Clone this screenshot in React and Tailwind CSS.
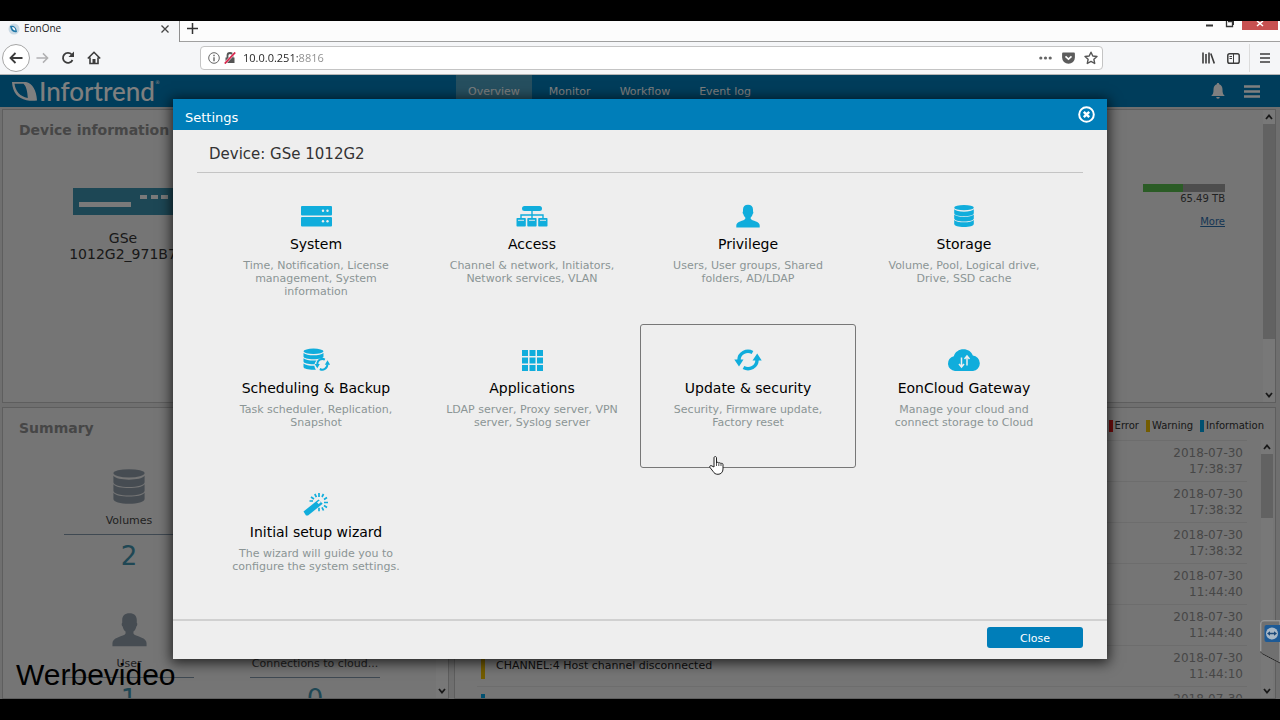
import { useState } from 'react';

const StackIcon = ({ className }) => (
  <svg viewBox="0 0 20 22" className={className} fill="currentColor">
    <ellipse cx="10" cy="2.700" rx="9.800" ry="2.600" />
    <path d="M.2 4.300c1.600 1.700 5 2.400 9.800 2.400s8.200-.7 9.800-2.400v4c0 1.700-4.400 3-9.800 3s-9.800-1.300-9.800-3z" />
    <path d="M.2 9.600c1.600 1.700 5 2.400 9.800 2.400s8.200-.7 9.800-2.400v4c0 1.700-4.400 3-9.800 3s-9.800-1.300-9.800-3z" />
    <path d="M.2 14.900c1.600 1.700 5 2.400 9.800 2.400s8.200-.7 9.800-2.400v4c0 1.700-4.400 3-9.800 3s-9.800-1.300-9.800-3z" />
  </svg>
);

const PersonIcon = ({ className }) => (
  <svg viewBox="0 0 24 24" className={className} fill="currentColor">
    <path d="M12 .8c-3.200 0-5 1.700-5 4.600v2c-.6.3-.4 2.200.3 2.500.3 1.600 1 2.700 2 3.500v1.400c-.6 1.300-2.600 1.600-5.300 2.600C1.500 18.300.3 19.500.3 21.500v2h23.400v-2c0-2-1.200-3.200-3.700-4.100-2.700-1-4.700-1.300-5.300-2.600v-1.400c1-.8 1.700-1.900 2-3.500.7-.3.900-2.200.3-2.500v-2c0-2.900-1.800-4.600-5-4.600z" />
  </svg>
);

const RefreshShape = () => (
  <>
    <path d="M5 11a9 8.500 0 0 1 13.500-7.500M23 11a9 8.500 0 0 1-13.500 7.500" fill="none" stroke="currentColor" strokeWidth="3.400" />
    <path d="M.3 10.500h9.200L5 17.500zM18.500 11.500h9.200L23.200 4.500z" />
  </>
);

const icons = {
  system: (
    <svg viewBox="0 0 31 21" className="h-[21px] w-[31px]" fill="currentColor">
      <rect width="31" height="9.500" rx="1" />
      <rect y="11" width="31" height="9.500" rx="1" />
      <g fill="#eee">
        <circle cx="22" cy="4.800" r="1.200" />
        <circle cx="26.500" cy="4.800" r="1.200" />
        <circle cx="22" cy="15.300" r="1.200" />
        <circle cx="26.500" cy="15.300" r="1.200" />
      </g>
    </svg>
  ),
  access: (
    <svg viewBox="0 0 32 22" className="h-[22px] w-8" fill="currentColor">
      <rect x="6" y="1" width="20" height="5" rx="2.500" />
      <path d="M16 6v7M5 13v-3h22v3" fill="none" stroke="currentColor" strokeWidth="1.400" />
      <rect x=".5" y="13" width="9.300" height="8.500" rx=".8" />
      <rect x="11.300" y="13" width="9.300" height="8.500" rx=".8" />
      <rect x="22.200" y="13" width="9.300" height="8.500" rx=".8" />
      <path d="M2 15.300h6M13 15.300h6M24 15.300h6" stroke="#eee" strokeWidth=".9" />
    </svg>
  ),
  privilege: <PersonIcon className="size-6" />,
  storage: <StackIcon className="h-[22px] w-5" />,
  scheduling: (
    <svg viewBox="0 0 28 24" className="h-6 w-7" fill="currentColor">
      <ellipse cx="11.500" cy="3.300" rx="10" ry="2.700" />
      <path d="M1.500 5c2 1.700 5.500 2.300 10 2.300s8-.6 10-2.300v3.500c0 1.700-4.500 2.700-10 2.700s-10-1-10-2.700z" />
      <path d="M1.500 10.300c2 1.700 5.500 2.300 10 2.300l3-.1c-1 1-1.700 2.300-2 3.700h-1c-5.500 0-10-1-10-2.700z" />
      <path d="M1.500 15.500c2 1.700 5.500 2.300 10 2.300h.9c.1 1.500.7 2.700 1.500 3.900l-2.400.1c-5.500 0-10-1-10-2.700z" />
      <g transform="translate(12.500 9.500) scale(.56 .62)">
        <RefreshShape />
      </g>
    </svg>
  ),
  applications: (
    <svg viewBox="0 0 21 21" className="size-[21px]" fill="currentColor">
      <path d="M0 0h6v6H0zM7.500 0h6v6h-6zM15 0h6v6h-6zM0 7.500h6v6H0zM7.500 7.500h6v6h-6zM15 7.500h6v6h-6zM0 15h6v6H0zM7.500 15h6v6h-6zM15 15h6v6h-6z" />
    </svg>
  ),
  update: (
    <svg viewBox="0 0 28 22" className="h-[22px] w-7" fill="currentColor">
      <RefreshShape />
    </svg>
  ),
  cloud: (
    <svg viewBox="0 0 34 22" className="h-[22px] w-[34px]" fill="currentColor">
      <path d="M8 22a7.500 7.500 0 0 1-1.200-14.800C8 3 12 .3 16.500.3c4.300 0 7.800 2.200 9.300 6.200A7.800 7.800 0 0 1 26 22z" />
      <path d="M14.500 8.500v9M12 15l2.500 3 2.500-3M20 16.500v-9M17.500 10L20 7l2.500 3" fill="none" stroke="#eee" strokeWidth="1.500" />
    </svg>
  ),
  wizard: (
    <svg viewBox="0 0 26 24" className="h-6 w-[26px]" fill="currentColor">
      <path d="M.5 19.500L15.500 7.500l4.200 4.200L5 23.500H3z" />
      <path d="M14 10.500l2.500-2 1.500 1.500-2.300 2z" fill="#eee" />
      <path d="M16 1v4M11.800 2l1.600 3.200M8 5l3 2M6.500 9h3.500M20.500 2L19 5M24 5.500L21 7.500M25 10.500h-4M24 15.500l-3-2M20.500 18.500l-1.500-3.200M16 19.300v-3.500" stroke="currentColor" strokeWidth="1.700" />
    </svg>
  ),
};

const settings = [
  { icon: 'system', title: 'System', text: 'Time, Notification, License\nmanagement, System\ninformation' },
  { icon: 'access', title: 'Access', text: 'Channel & network, Initiators,\nNetwork services, VLAN' },
  { icon: 'privilege', title: 'Privilege', text: 'Users, User groups, Shared\nfolders, AD/LDAP' },
  { icon: 'storage', title: 'Storage', text: 'Volume, Pool, Logical drive,\nDrive, SSD cache' },
  { icon: 'scheduling', title: 'Scheduling & Backup', text: 'Task scheduler, Replication,\nSnapshot' },
  { icon: 'applications', title: 'Applications', text: 'LDAP server, Proxy server, VPN\nserver, Syslog server' },
  { icon: 'update', title: 'Update & security', text: 'Security, Firmware update,\nFactory reset' },
  { icon: 'cloud', title: 'EonCloud Gateway', text: 'Manage your cloud and\nconnect storage to Cloud' },
  { icon: 'wizard', title: 'Initial setup wizard', text: 'The wizard will guide you to\nconfigure the system settings.' },
];

const events = [
  { time: '17:38:37', color: 'bg-[#00a0e0]' },
  { time: '17:38:32', color: 'bg-[#00a0e0]' },
  { time: '17:38:32', color: 'bg-[#00a0e0]' },
  { time: '11:44:40', color: 'bg-[#e6b800]' },
  { time: '11:44:40', color: 'bg-[#e6b800]' },
  { time: '11:44:10', color: 'bg-[#e6b800]', text: 'CHANNEL:4 Host channel disconnected' },
  { time: '11:44:10', color: 'bg-[#00a0e0]' },
];

const Chevron = ({ up }) => (
  <svg viewBox="0 0 8 6" className="h-[6px] w-2" fill="none" stroke="#333" strokeWidth="1.800">
    <path d={up ? 'M1 5l3-3.500L7 5' : 'M1 1l3 3.500L7 1'} />
  </svg>
);

const Scrollbar = ({ thumb }) => (
  <div className="flex w-3 shrink-0 flex-col items-center justify-between bg-[#f0f0f0] py-1">
    <div className="flex w-full flex-col items-center gap-1">
      <Chevron up />
      <div className={`w-full bg-[#c4c4c4] ${thumb}`} />
    </div>
    <Chevron />
  </div>
);

const BrowserBar = () => (
  <div className="shrink-0 font-['Open_Sans',sans-serif]">
    <div className="flex h-[21px] bg-[#fcfcfc]">
      <div className="flex w-[180px] items-center border-r border-[#8f8f8f] bg-[#f5f6f8] pr-[10px] pb-[6px] pl-2">
        <svg viewBox="0 0 12 12" className="size-3">
          <circle cx="6" cy="6" r="5.500" fill="#c9d9e4" />
          <path d="M2 3c3-1 6 0 7 6-4 1-6-1-7-6z" fill="#1f77a8" />
          <path d="M4 4c2 0 3 1 3.500 3.500C5.500 7.500 4.500 6 4 4z" fill="#fff" />
        </svg>
        <span className="ml-1 flex-1 text-[10px] text-[#222]">EonOne</span>
        <button aria-label="Close tab">
          <svg viewBox="0 0 8 8" className="size-2" stroke="#444" strokeWidth="1.300">
            <path d="M.5.5l7 7M7.500.5l-7 7" />
          </svg>
        </button>
      </div>
      <div className="flex flex-1 items-start border-b border-[#a0a0a0]">
        <button aria-label="New tab" className="ml-[7px] pt-[2px]">
          <svg viewBox="0 0 11 11" className="size-[11px]" stroke="#333" strokeWidth="1.500">
            <path d="M5.500 0v11M0 5.500h11" />
          </svg>
        </button>
        <div className="ml-auto flex items-start pr-[2px]">
          <svg viewBox="0 0 28 9" className="mr-2 h-[9px] w-7" fill="none" stroke="#333">
            <path d="M0 4.500h7" strokeWidth="2" />
            <path d="M20.500 0v5.500h6V0M22 .5h5.500V4" strokeWidth="1.300" />
          </svg>
          <button aria-label="Close window" className="flex h-[9px] w-9 items-start justify-center bg-[#c75050]">
            <svg viewBox="0 0 8 6" className="h-[6px] w-2" stroke="#fff" strokeWidth="1.500">
              <path d="M1 0l6 5M7 0L1 5" />
            </svg>
          </button>
        </div>
      </div>
    </div>
    <div className="flex h-[33px] items-center border-b border-[#b5b5b5] bg-[#f5f6f8] pr-[10px] pl-[2px] text-[#3c3c3c]">
      <button aria-label="Back" className="flex size-7 items-center justify-center rounded-full border border-[#a6a6a6] bg-white">
        <svg viewBox="0 0 14 12" className="h-3 w-[14px]" fill="none" stroke="currentColor" strokeWidth="1.800">
          <path d="M13.500 6H1.500M6.500 1L1.500 6l5 5" />
        </svg>
      </button>
      <button aria-label="Forward" className="ml-[6px] text-[#b0b0b2]">
        <svg viewBox="0 0 14 12" className="h-3 w-[13px]" fill="none" stroke="currentColor" strokeWidth="1.600">
          <path d="M.5 6h12M7.500 1l5 5-5 5" />
        </svg>
      </button>
      <button aria-label="Reload" className="ml-3">
        <svg viewBox="0 0 14 14" className="size-[14px]" fill="none" stroke="currentColor" strokeWidth="1.800">
          <path d="M11.500 9a5 5 0 1 1-.8-5.500" />
          <path d="M13 .5v5.500H7.500z" fill="currentColor" stroke="none" />
        </svg>
      </button>
      <button aria-label="Home" className="ml-3">
        <svg viewBox="0 0 14 14" className="size-[14px]" fill="none" stroke="currentColor" strokeWidth="1.600">
          <path d="M.8 7.500L7 1.300l6.200 6.200M3 6.500v6h8v-6" />
          <path d="M5.500 8h3v5h-3z" fill="currentColor" stroke="none" />
        </svg>
      </button>
      <div className="ml-[99px] flex h-6 flex-1 items-center rounded-sm border border-[#c4c4c4] bg-white pr-1 pl-[7px]">
        <svg viewBox="0 0 12 12" className="size-3" fill="none" stroke="#666">
          <circle cx="6" cy="6" r="5.300" />
          <path d="M6 5.200v4M6 2.800v1.400" strokeWidth="1.400" />
        </svg>
        <svg viewBox="0 0 12 12" className="ml-1 size-3">
          <path d="M1.500 5.500h9V11h-9z" fill="#555" />
          <path d="M3.500 6V3.500a2.500 2.500 0 0 1 5 0V6" fill="none" stroke="#555" strokeWidth="1.800" />
          <path d="M.8 11.500L11.200.5" stroke="#fff" strokeWidth="2.600" />
          <path d="M.8 11.500L11.200.5" stroke="#d7264c" strokeWidth="1.800" />
        </svg>
        <input
          type="text"
          aria-label="Address"
          defaultValue="10.0.0.251:8816"
          className="ml-[7px] min-w-0 flex-1 bg-[linear-gradient(90deg,#222_55px,#8a8a8a_55px)] bg-clip-text text-[11px] text-transparent outline-none"
        />
        <button aria-label="Page actions">
          <svg viewBox="0 0 13 4" className="h-1 w-[13px]" fill="#666">
            <circle cx="1.800" cy="2" r="1.600" />
            <circle cx="6.500" cy="2" r="1.600" />
            <circle cx="11.200" cy="2" r="1.600" />
          </svg>
        </button>
        <button aria-label="Save to Pocket" className="ml-[10px]">
          <svg viewBox="0 0 13 12" className="h-3 w-[13px]">
            <path d="M1.300.5h10.400c.7 0 1.200.5 1.200 1.200V5.500a6.400 6.200 0 0 1-12.800 0V1.700C.1 1 .6.500 1.300.5z" fill="#5c5c5c" />
            <path d="M3.500 4.300l3 2.900 3-2.900" fill="none" stroke="#fff" strokeWidth="1.600" />
          </svg>
        </button>
        <button aria-label="Bookmark" className="ml-[9px]">
          <svg viewBox="0 0 14 14" className="size-[14px]" fill="none" stroke="#555" strokeWidth="1.400" strokeLinejoin="round">
            <path d="M7 1.200l1.800 3.800 4.200.5-3.100 2.800.8 4.200L7 10.400l-3.700 2.100.8-4.200L1 5.500 5.200 5z" />
          </svg>
        </button>
      </div>
      <button aria-label="Library" className="ml-[99px]">
        <svg viewBox="0 0 13 12" className="h-3 w-[13px]" fill="none" stroke="currentColor" strokeWidth="1.600">
          <path d="M1 .5v11M4 2v9.500M7 .5v11M8.800 1.500l3.500 10" />
        </svg>
      </button>
      <button aria-label="Sidebars" className="ml-3">
        <svg viewBox="0 0 13 11" className="h-[11px] w-[13px]" fill="none" stroke="currentColor" strokeWidth="1.500">
          <rect x=".8" y=".8" width="11.400" height="9.400" rx="1.800" />
          <path d="M6.500 1v9M2.500 3.500h2.500M2.500 5.500h2.500" strokeWidth="1" />
        </svg>
      </button>
      <div className="ml-[9px] h-7 w-px bg-[#dcdcdc]" />
      <button aria-label="Menu" className="ml-[10px]">
        <svg viewBox="0 0 10 10" className="size-[10px]" stroke="currentColor" strokeWidth="1.500">
          <path d="M0 1h10M0 5h10M0 9h10" />
        </svg>
      </button>
    </div>
  </div>
);

const AppHeader = () => (
  <header className="flex h-8 shrink-0 items-center bg-[#007ab6] text-white">
    <div className="flex w-[456px] items-center pl-3">
      <svg viewBox="0 0 25 19" className="h-[19px] w-[25px]" fill="currentColor" fillRule="evenodd">
        <path d="M0 0h14c6.500 1.500 10.500 8 11 18.500-3.500.3-7 .3-10.500-.3C6 16.500.5 10.500 0 0zm2.500 1.700c1 7.300 5 12.500 13.300 14.400C15.500 10 14.500 4.500 11.500 1.700z" />
      </svg>
      <span className="ml-[2px] font-['Lato',sans-serif] text-[26px] leading-8 font-medium">Infortrend</span>
      <span className="mb-4 text-[5px]">®</span>
    </div>
    <nav className="flex h-full gap-[5px] text-[11px] leading-[34px]">
      <a href="#overview" className="bg-[#4c9fbe] px-3">Overview</a>
      <a href="#monitor" className="px-3">Monitor</a>
      <a href="#workflow" className="px-3">Workflow</a>
      <a href="#eventlog" className="px-3">Event log</a>
    </nav>
    <div className="ml-auto flex items-center gap-[19px] pr-5">
      <button aria-label="Notifications">
        <svg viewBox="0 0 14 16" className="h-4 w-[14px]" fill="currentColor">
          <path d="M7 0c.9 0 1.200.5 1.200 1.200C10.500 2 11.500 4 11.500 6.500c0 3.500.5 4.800 2.300 6.500H.2C2 11.300 2.500 10 2.500 6.500 2.500 4 3.500 2 5.800 1.200 5.800.5 6.100 0 7 0zM5.200 14h3.600a1.800 1.800 0 0 1-3.600 0z" />
        </svg>
      </button>
      <button aria-label="Main menu">
        <svg viewBox="0 0 16 13" className="h-[13px] w-4" stroke="currentColor" strokeWidth="2.400">
          <path d="M0 1.500h16M0 6.500h16M0 11.500h16" />
        </svg>
      </button>
    </div>
  </header>
);

const SummaryItem = ({ icon, label, value, className = '' }) => (
  <div className={`flex h-[143px] flex-col items-center ${className}`}>
    <div className="flex h-[35px] items-center text-[#8d99a5]">{icon}</div>
    <div className="mt-2 text-[11px] leading-[18px] text-[#444]">{label}</div>
    <div className="mt-1 w-full border-t border-[#7f93a4] text-center text-[26px] leading-[42px] text-[#3f8ea8]">{value}</div>
  </div>
);

const LegendItem = ({ color, label }) => (
  <li className="flex items-center gap-[2px]">
    <span className={`h-3 w-1 ${color}`} />
    {label}
  </li>
);

const Dashboard = () => (
  <main className="flex min-h-0 flex-1 flex-col gap-1 bg-[#dedede] pt-[2px] pr-1 pl-[2px]">
    <section className="flex h-[294px] shrink-0 border border-[#bdbdbd] bg-[#eaeaea]">
      <div className="flex-1 pl-4">
        <h2 className="pt-[11px] text-[14px] leading-[18px] font-bold text-[#8c8c8c]">Device information</h2>
        <div className="mt-[49px] ml-12 flex w-[112px] flex-col items-center">
          <svg viewBox="0 0 100 27" className="h-[27px] w-[100px]">
            <rect width="100" height="27" fill="#3a8fab" />
            <path d="M6 14h52v5H6zM67 7h7v4h-7zM78 7h7v4h-7zM88 7h7v4h-7z" fill="#f4f4f4" />
          </svg>
          <p className="mt-[15px] text-center text-[14px] leading-4 text-[#333]">GSe<br />1012G2_971B7</p>
        </div>
      </div>
      <div className="w-[82px] pt-[74px] text-right">
        <div className="flex h-2 bg-[#9a9a9a]">
          <div className="bg-[#57b94d]" style={{ width: '49%' }} />
        </div>
        <p className="text-[10px] leading-[14px] text-[#444]">65.49 TB</p>
        <a href="#capacity" className="mt-2 inline-block text-[10px] leading-4 text-[#2a6ca8] underline">More</a>
      </div>
      <div className="ml-[38px] flex">
        <Scrollbar thumb="h-[215px]" />
      </div>
    </section>
    <div className="flex min-h-0 flex-1 gap-[5px]">
      <section className="flex w-[447px] shrink-0 overflow-hidden border border-[#bdbdbd] bg-[#eaeaea]">
        <div className="flex-1 pl-4">
          <h2 className="pt-[11px] text-[14px] leading-[18px] font-bold text-[#8c8c8c]">Summary</h2>
          <div className="mt-8 ml-[45px] grid grid-cols-[130px_130px] gap-x-14">
            <SummaryItem icon={<StackIcon className="h-[35px] w-8" />} label="Volumes" value="2" />
            <SummaryItem icon={<PersonIcon className="size-[35px]" />} label="User" value="1" className="col-start-1" />
            <SummaryItem icon={<PersonIcon className="size-[35px]" />} label="Connections to cloud..." value="0" />
          </div>
        </div>
        <Scrollbar thumb="h-[100px]" />
      </section>
      <section className="flex min-w-0 flex-1 flex-col border border-[#bdbdbd] bg-[#eaeaea] pr-[2px] pl-[22px]">
        <ul className="flex h-8 items-center justify-end gap-[7px] pt-[3px] pr-[9px] text-[10px] text-[#333]">
          <LegendItem color="bg-[#e01818]" label="Error" />
          <LegendItem color="bg-[#e6b800]" label="Warning" />
          <LegendItem color="bg-[#00a0e0]" label="Information" />
        </ul>
        <div className="flex min-h-0 flex-1 overflow-hidden">
          <ul className="mr-[14px] flex-1">
            {events.map((event, i) => (
              <li key={i} className="flex h-[41px] items-center border-t border-[#dadada] pr-1 pl-1">
                <span className={`h-[26px] w-1 ${event.color}`} />
                <span className="ml-[11px] flex-1 text-[11px] text-[#222]">{event.text}</span>
                <time className="text-right text-[12px] leading-4 text-[#8e8e8e]">
                  2018-07-30
                  <br />
                  {event.time}
                </time>
              </li>
            ))}
          </ul>
          <Scrollbar thumb="h-16" />
        </div>
      </section>
    </div>
  </main>
);

const SettingsDialog = ({ onClose }) => {
  const [active, setActive] = useState('update');

  return (
    <div role="dialog" aria-label="Settings" className="w-full bg-[#eee] shadow-[0_2px_12px_2px_rgba(0,0,0,0.7)]">
      <div className="flex h-[31px] items-center justify-between bg-[#007eb9] px-3 text-white">
        <h1 className="pt-[7px] text-[13px] leading-5">Settings</h1>
        <button aria-label="Close settings" onClick={onClose}>
          <svg viewBox="0 0 17 17" className="size-[17px]" fill="none" stroke="currentColor">
            <circle cx="8.500" cy="8.500" r="7.300" strokeWidth="2" />
            <path d="M5.800 5.800l5.400 5.400M11.200 5.800l-5.400 5.400" strokeWidth="2.400" />
          </svg>
        </button>
      </div>
      <div className="mx-6 border-b border-[#c4c4c4] px-3 pt-[14px] pb-2 text-[15px] leading-5 text-[#333]">
        Device: GSe 1012G2
      </div>
      <div className="mx-[35px] mt-[7px] grid grid-cols-4">
        {settings.map((item) => (
          <button
            key={item.icon}
            onMouseEnter={() => setActive(item.icon)}
            className={`flex h-36 flex-col items-center rounded-[3px] border pt-[23px] ${active === item.icon ? 'border-[#777]' : 'border-transparent'}`}
          >
            <span className="flex h-6 items-center text-[#10addc]">{icons[item.icon]}</span>
            <span className="mt-[6px] text-[14px] leading-5 text-black">{item.title}</span>
            <span className="mt-[5px] text-[11px] leading-[13px] whitespace-pre text-[#8b9595]">{item.text}</span>
          </button>
        ))}
      </div>
      <div className="mt-[7px] flex h-10 items-start justify-end border-t-2 border-[#d0d0d0] px-6 pt-[6px]">
        <button onClick={onClose} className="h-[21px] w-24 rounded-[3px] bg-[#007eb9] text-[11px] leading-[23px] text-white">
          Close
        </button>
      </div>
    </div>
  );
};

const App = () => {
  const [open, setOpen] = useState(true);

  return (
    <div className="relative flex h-screen flex-col overflow-hidden bg-black py-[21px] font-['DejaVu_Sans',sans-serif]">
      <BrowserBar />
      <div className="relative flex min-h-0 flex-1 flex-col overflow-hidden">
        <AppHeader />
        <Dashboard />
        {open && (
          <div className="absolute inset-0 flex items-start justify-center bg-black/50 px-[173px] pt-6">
            <SettingsDialog onClose={() => setOpen(false)} />
          </div>
        )}
        {/* remote session tab on the screen edge */}
        <svg viewBox="0 0 20 44" className="absolute right-0 bottom-[35px] h-11 w-5">
          <path d="M20 .8H4C2 .8.800 2 .800 4v27.500c0 1 .5 1.600 1.500 2.200L20 43z" fill="#707070" stroke="#a5a5a5" />
          <path d="M.8 31.500c0 1 .5 1.600 1.500 2.200L20 43" fill="none" stroke="#222" />
          <rect x="4.500" y="5" width="17" height="17" rx="2" fill="#1d5a96" />
          <circle cx="12" cy="13.500" r="6" fill="#a9b8c6" />
          <path d="M7 13.500l3-2.300v1.500h4v-1.500l3 2.300-3 2.300v-1.500h-4v1.500z" fill="#1d4a7a" />
        </svg>
      </div>
      {/* mouse pointer */}
      <svg viewBox="0 0 15 19" className="absolute top-[456px] left-[709px] h-[19px] w-[15px]" fill="#fff" stroke="#222" strokeLinejoin="round">
        <path d="M5 11V2c0-2 2.500-2 2.500 0v5c.3-1 2-1 2.300.2.500-.8 1.900-.6 2.100.5.600-.7 2.100-.5 2.100.900V13c0 3-2 5.300-5 5.300-2.500 0-3.800-1-5-3L1 11.500c-1-1.500.8-2.500 2-1.500z" />
        <path d="M7.500 7v3M9.800 7.500V10M12 8v2" fill="none" strokeWidth=".8" />
      </svg>
      <div className="pointer-events-none absolute bottom-7 left-4 font-['Liberation_Sans',sans-serif] text-[30px] leading-[34px] text-black">
        Werbevideo
      </div>
    </div>
  );
};

export default App;
